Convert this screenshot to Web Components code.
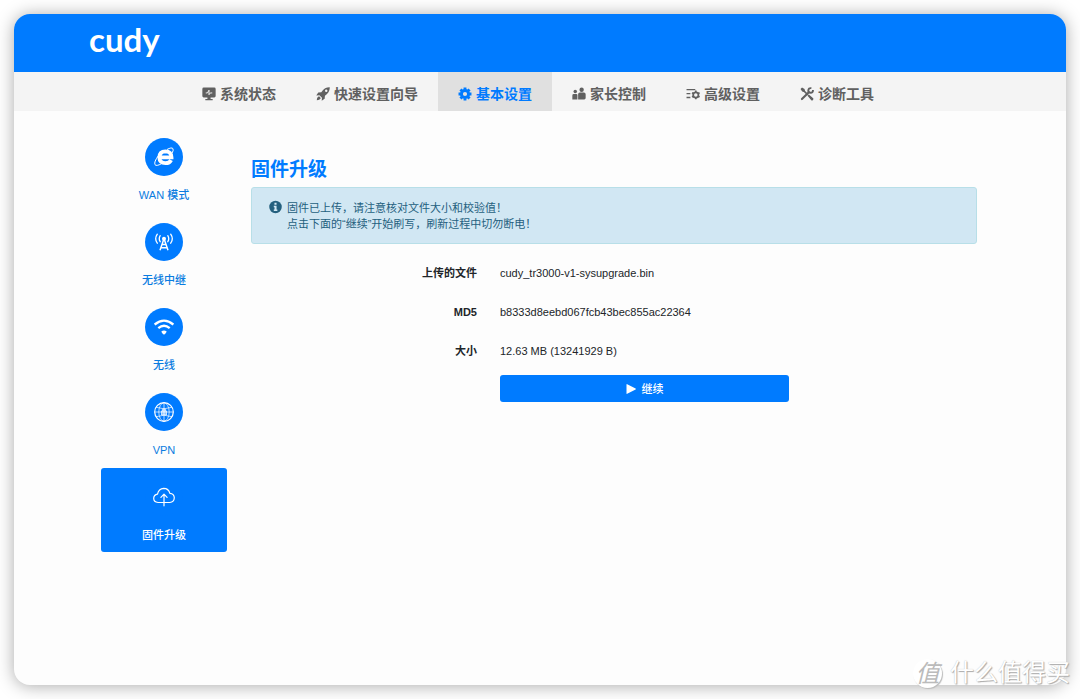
<!DOCTYPE html>
<html lang="zh-CN">
<head>
<meta charset="utf-8">
<meta name="viewport" content="width=device-width, initial-scale=1">
<title>cudy 固件升级</title>
<style>
html { height: 100%; }
body {
  margin: 0; min-height: 100%; display: flex; box-sizing: border-box; background: #fff;
  font: 11px/16px "Liberation Sans", "Noto Sans CJK SC", sans-serif; color: #212529;
  --blue: #007bff; --link: #0a7ce0;
}
</style>
</head>
<body>
<router-window>
  <app-header slot="header"></app-header>
  <top-nav slot="nav">
    <nav-tab icon="monitor">系统状态</nav-tab>
    <nav-tab icon="rocket">快速设置向导</nav-tab>
    <nav-tab icon="gear" active>基本设置</nav-tab>
    <nav-tab icon="family">家长控制</nav-tab>
    <nav-tab icon="sliders">高级设置</nav-tab>
    <nav-tab icon="tools">诊断工具</nav-tab>
  </top-nav>
  <side-menu slot="side">
    <side-item icon="ie">WAN 模式</side-item>
    <side-item icon="tower">无线中继</side-item>
    <side-item icon="wifi">无线</side-item>
    <side-item icon="globe">VPN</side-item>
    <side-item icon="cloud" active>固件升级</side-item>
  </side-menu>
  <firmware-panel>
    <span slot="title">固件升级</span>
    <info-alert slot="alert">固件已上传，请注意核对文件大小和校验值！<br>点击下面的“继续”开始刷写，刷新过程中切勿断电！</info-alert>
    <detail-row slot="rows" label="上传的文件">cudy_tr3000-v1-sysupgrade.bin</detail-row>
    <detail-row slot="rows" label="MD5">b8333d8eebd067fcb43bec855ac22364</detail-row>
    <detail-row slot="rows" label="大小">12.63 MB (13241929 B)</detail-row>
    <proceed-button slot="action">继续</proceed-button>
  </firmware-panel>
</router-window>
<page-watermark></page-watermark>

<script>
const ICONS = {
  monitor: '<svg viewBox="0 0 16 16"><path fill="currentColor" d="M2 .6h12a1.600 1.600 0 0 1 1.600 1.600v8.100a1.600 1.600 0 0 1-1.600 1.600H9.800v1.800h2.400v1.500H3.800v-1.500h2.400v-1.800H2A1.600 1.600 0 0 1 .4 10.300V2.200A1.600 1.600 0 0 1 2 .6z"/><path stroke="#f4f4f4" stroke-width="1.100" fill="none" d="M4.300 6.800h1.900L8 3.600v5.200l1.500-2h2.200"/></svg>',
  rocket: '<svg viewBox="0 0 16 16"><path fill="currentColor" fill-rule="evenodd" d="M15.700.4Q10.700.2 7.800 3.800L6.100 5.900 2.600 6.300.3 9.600l3.600-.3 2.900 2.900-.3 3.500 3.400-2.200.3-3.600 2.100-1.700Q15.900 5.300 15.700.4zM11.700 5.700a1.400 1.400 0 1 1 0-2.800 1.400 1.400 0 0 1 0 2.800z"/><path fill="currentColor" d="M3.500 10.700Q1.200 11.200.9 15.100q3.900-.2 4.500-2.500z"/></svg>',
  gear: '<svg viewBox="0 0 16 16"><circle cx="8" cy="8" r="4.100" fill="none" stroke="currentColor" stroke-width="3.400"/><path stroke="currentColor" stroke-width="3.300" d="M8 .6v2.600M8 12.800v2.600M.6 8h2.600M12.800 8h2.600M2.800 2.800l1.800 1.800M11.400 11.400l1.800 1.800M2.800 13.200l1.800-1.800M11.400 4.600l1.800-1.800"/></svg>',
  family: '<svg viewBox="0 0 16 16" fill="currentColor"><circle cx="11" cy="3.100" r="2.500"/><circle cx="3.700" cy="5.200" r="2"/><path d="M7 14.300V8.300q0-2 2-2h4.600q2 0 2 2v4.400q0 1.600-1.600 1.600zM.4 14.300V9.600Q.4 8 2 8h3q1.200 0 1.200 1.200v5.100z"/></svg>',
  sliders: '<svg viewBox="0 0 16 16" fill="none" stroke="currentColor"><path stroke-width="1.500" d="M.6 3h10M.6 7.500h4.400M.6 12h4.400"/><circle cx="11.200" cy="9" r="3" stroke-width="2"/><path stroke-width="1.900" d="M11.200 4v2M11.200 12v2M6.900 6.500l1.700 1M13.800 10.500l1.700 1M6.900 11.500l1.700-1M13.800 7.500l1.700-1"/></svg>',
  tools: '<svg viewBox="0 0 16 16" fill="none" stroke="currentColor"><path stroke-width="1.700" d="M3 3l6 6"/><path fill="currentColor" stroke="none" d="M.6 2.300L2.300.6l2.900 1.800.5 2.200-1 1-2.200-.5zM8.600 10l1.500-1.500 5 4.400q.7.800-.3 1.900t-1.900.3z"/><path stroke-width="2.400" stroke-linecap="round" d="M2.200 13.800l7.900-7.900"/><path stroke-width="2.200" d="M13 1.300q-3.300-.4-3.500 2.900 0 2.400 2.600 2.400 2.800 0 2.700-3.200"/></svg>',
  ie: '<svg viewBox="0 0 20 20" fill="none" stroke="#fff"><path stroke-width="3.800" d="M5.800 10.300h11.700Q17.200 4.500 11.500 4.400 5.400 4.600 5.300 10.500q.2 5.600 6.200 5.700 4.100 0 5.600-3.100"/><path stroke-width="1" d="M13 2.500q4.700-2.500 5.900-.9 1 1.400-.9 4.700M4.500 8.500Q-.3 15 1 17.700q1.300 1.800 6.500-1"/></svg>',
  tower: '<svg viewBox="0 0 20 20" fill="none" stroke="#fff"><circle cx="10" cy="6.800" r="2" fill="#fff" stroke="none"/><path stroke-width="1.500" d="M9.700 7.500L6 18.300M10.300 7.500L14 18.300M8 12.500h4M7 15.800h6"/><path stroke-width="1.300" stroke-linecap="round" d="M6.200 3.700q-1.900 3 0 6M3.300 2.200q-3.200 4.500 0 9M13.800 3.700q1.900 3 0 6M16.700 2.200q3.200 4.500 0 9"/></svg>',
  wifi: '<svg viewBox="0 0 20 20" fill="none" stroke="#fff"><path stroke-width="2.300" d="M.6 7.500q9.400-7.800 18.800 0M4.300 11.200q5.700-4.800 11.400 0"/><path fill="#fff" stroke="none" d="M7.300 14.600Q10 12.300 12.700 14.600 12.100 16.700 10 17.700 7.900 16.700 7.300 14.600z"/></svg>',
  globe: '<svg viewBox="0 0 20 20" fill="none" stroke="#fff" stroke-width=".7"><circle cx="10" cy="10" r="9.300" stroke-width="1.200"/><ellipse cx="10" cy="10" rx="5.200" ry="9.200"/><path d="M10 .8v18.400M.8 10h18.400M2.300 5.300q7.700 3 15.400 0M2.300 14.700q7.700-3 15.400 0"/><path fill="#fff" fill-opacity=".55" d="M7.500 9h5v4h-5zM8.300 9V7.500q1.700-1.700 3.400 0V9"/></svg>',
  cloud: '<svg viewBox="0 0 22 20" fill="none" stroke="#fff" stroke-width="1.200" stroke-linecap="round" stroke-linejoin="round"><path d="M8.500 15.500H5Q.7 15.200.7 11.300.8 7.800 4.500 7.200 5.600 1.500 10.700 1.300 15.500 1.300 16.900 6.300q4.200.3 4.400 4.500-.2 4.500-4.500 4.700H8.500M11 18.800V7.500M7.900 10.300L11 7.200l3.100 3.100"/></svg>',
  info: '<svg viewBox="0 0 16 16"><circle cx="8" cy="8" r="7.700" fill="currentColor"/><path fill="#d1e7f3" d="M6.700 2.800h2.600v2.500H6.700zM5.900 6.500h3.400v4.700h1v1.700H5.900v-1.700h.9v-3h-.9z"/></svg>',
  play: '<svg viewBox="0 0 10 10"><path fill="currentColor" d="M.5.6q0-.7.700-.4L9.600 4.500q.6.500 0 1L1.200 9.800q-.7.300-.7-.4z"/></svg>'
};

function define(name, markup, setup) {
  const template = document.createElement('template');
  template.innerHTML = markup;
  customElements.define(name, class extends HTMLElement {
    connectedCallback() {
      if (this.shadowRoot) return;
      const content = template.content.cloneNode(true);
      if (setup) setup(this, content);
      this.attachShadow({ mode: 'open' }).append(content);
    }
  });
}

define('ui-icon', `<style>
  :host { display: block; flex: none; width: 14px; height: 14px; }
  svg { display: block; width: 100%; height: 100%; }
</style>`, (host, content) => content.append(
  Object.assign(document.createElement('template'), { innerHTML: ICONS[host.getAttribute('name')] || '' }).content));

define('router-window', `<style>
  :host { display: flex; flex-direction: column; flex: 1; min-width: 0; margin: 14px; border-radius: 16px;
    overflow: hidden; background: #fdfdfd; box-shadow: 0 1px 17px 0 rgba(0,0,0,.34); }
  .body { display: grid; grid-template-columns: 126px minmax(0, 1fr); gap: 24px; padding: 17px 89px 24px 87px; align-items: start; }
</style>
<slot name="header"></slot><slot name="nav"></slot>
<div class="body"><slot name="side"></slot><slot></slot></div>`);

define('app-header', `<style>
  :host { display: block; background: var(--blue); padding: 7px 75px 15px; }
  a { display: block; width: max-content; color: #fff; text-decoration: none; font: 700 33px/36px Lato, sans-serif; }
</style><header><a href="#">cudy</a></header>`);

define('top-nav', `<style>
  :host { display: block; background: #f4f4f4; }
  nav { display: flex; justify-content: center; padding-right: 4px; }
</style><nav><slot></slot></nav>`);

define('nav-tab', `<style>
  :host { display: block; color: #606060; }
  a { display: flex; align-items: center; gap: 4px; height: 39px; padding: 4px 20px 0; box-sizing: border-box;
    color: inherit; text-decoration: none; font-size: 14px; line-height: 20px; font-weight: 700; }
  :host([active]) { color: var(--blue); background: #e0e0e0; }
</style><a href="#"><ui-icon></ui-icon><span><slot></slot></span></a>`,
  (host, content) => content.querySelector('ui-icon').setAttribute('name', host.getAttribute('icon')));

define('side-menu', `<style>
  :host { display: block; }
  nav { display: grid; gap: 1px; }
</style><nav><slot></slot></nav>`);

define('side-item', `<style>
  :host { display: block; color: var(--link); }
  a { display: flex; flex-direction: column; align-items: center; gap: 11px; height: 84px; padding-top: 10px;
    box-sizing: border-box; border-radius: 3px; color: inherit; text-decoration: none; font-weight: 500; }
  .disc { display: grid; place-items: center; width: 38px; height: 38px; border-radius: 50%; background: var(--blue); }
  ui-icon { width: 20px; height: 20px; }
  ui-icon[name="cloud"] { width: 22px; }
  :host([active]) { color: #fff; }
  :host([active]) a { background: var(--blue); }
</style><a href="#"><span class="disc"><ui-icon></ui-icon></span><span><slot></slot></span></a>`,
  (host, content) => content.querySelector('ui-icon').setAttribute('name', host.getAttribute('icon')));

define('firmware-panel', `<style>
  :host { display: block; padding-top: 28px; }
  h2 { margin: 0; padding-bottom: 4px; font-size: 19px; line-height: 27px; font-weight: 700; color: var(--blue); }
  dl { margin: 9px 0 0; }
</style>
<main><h2><slot name="title"></slot></h2><slot name="alert"></slot>
<dl><slot name="rows"></slot></dl><slot name="action"></slot></main>`);

define('info-alert', `<style>
  :host { display: flex; gap: 5px; padding: 12px 17px 11px; background: #d1e7f3; border: 1px solid #b8dfe8;
    border-radius: 3px; color: #24607e; }
  ui-icon { width: 13px; }
  p { margin: 0; }
</style><ui-icon name="info"></ui-icon><p role="status"><slot></slot></p>`);

define('detail-row', `<style>
  :host { display: grid; grid-template-columns: 226px minmax(0, 1fr); column-gap: 23px; align-items: center; min-height: 39px; }
  dt { text-align: right; font-weight: 700; }
  dd { margin: 0; }
</style><dt></dt><dd><slot></slot></dd>`,
  (host, content) => content.querySelector('dt').textContent = host.getAttribute('label'));

define('proceed-button', `<style>
  :host { display: grid; grid-template-columns: minmax(0, 289fr) minmax(0, 188fr); padding-left: 249px; margin-top: 5px; }
  button { display: flex; align-items: center; justify-content: center; gap: 6px; height: 27px; border: 0; border-radius: 3px;
    background: var(--blue); color: #fff; font: inherit; font-weight: 500; }
  ui-icon { width: 10px; height: 10px; }
</style><button type="button"><ui-icon name="play"></ui-icon><span><slot></slot></span></button>`);

define('page-watermark', `<style>
  :host { position: absolute; right: 10px; bottom: 10px; display: flex; align-items: center; gap: 8px; color: #fff;
    font-size: 24px; line-height: 32px; text-shadow: 1px 1px 1px #aaa, 0 0 1px #bbb; pointer-events: none; }
  .seal { width: 29px; height: 29px; border-radius: 50%; background: #fff; color: #bbb; box-shadow: 1px 1px 1px #bbb;
    display: grid; place-items: center; line-height: 29px; text-shadow: none; font-style: italic; }
</style><span class="seal">值</span><span>什么值得买</span>`);
</script>
</body>
</html>
